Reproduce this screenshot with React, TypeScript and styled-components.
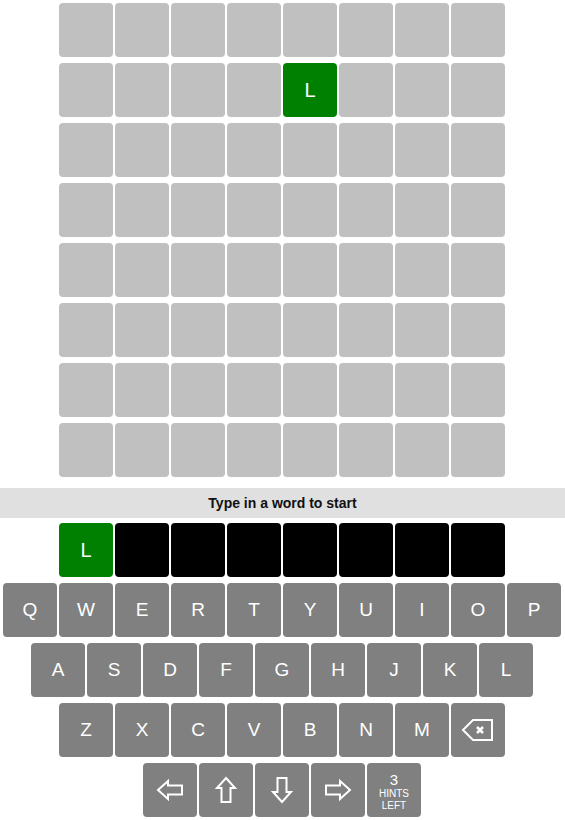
import styled, { createGlobalStyle } from "styled-components";

const GlobalStyle = createGlobalStyle`
  html, body {
    margin: 0;
    padding: 0;
    background: #ffffff;
    font-family: "Liberation Sans", Arial, sans-serif;
  }
`;

const Page = styled.div`
  width: 564px;
  display: flex;
  flex-direction: column;
  align-items: center;
`;

const Board = styled.div`
  display: flex;
  flex-direction: column;
  gap: 6px;
  padding-top: 3px;
`;

const Row = styled.div`
  display: flex;
  gap: 2px;
  justify-content: center;
`;

const Tile = styled.div<{ $tone: "empty" | "hit" | "blank" }>`
  width: 54px;
  height: 54px;
  border-radius: 4px;
  display: flex;
  align-items: center;
  justify-content: center;
  color: #ffffff;
  font-size: 20px;
  background: ${(p) =>
    p.$tone === "hit" ? "#008000" : p.$tone === "blank" ? "#000000" : "#c0c0c0"};
`;

const Message = styled.div`
  align-self: flex-start;
  width: 565px;
  margin-top: 11px;
  height: 30px;
  background: #e0e0e0;
  display: flex;
  align-items: center;
  justify-content: center;
  font-size: 14px;
  font-weight: bold;
  color: #111111;
`;

const Entry = styled(Row)`
  margin-top: 5px;
`;

const Keyboard = styled.div`
  margin-top: 6px;
  display: flex;
  flex-direction: column;
  gap: 6px;
`;

const Key = styled.div`
  width: 54px;
  height: 54px;
  border-radius: 4px;
  background: #808080;
  color: #ffffff;
  font-size: 19px;
  display: flex;
  align-items: center;
  justify-content: center;
`;

const HintKey = styled(Key)`
  flex-direction: column;
  font-size: 10px;
  line-height: 11.5px;
  padding-top: 2px;
  box-sizing: border-box;

  & b {
    font-weight: normal;
    font-size: 15px;
    line-height: 17px;
  }
`;

const board: string[][] = Array.from({ length: 8 }, (_, r) =>
  Array.from({ length: 8 }, (_, c) => (r === 1 && c === 4 ? "L" : ""))
);

const rows = ["QWERTYUIOP", "ASDFGHJKL", "ZXCVBNM"];

const Icon = ({ d }: { d: string }) => (
  <svg width="30" height="30" viewBox="0 0 30 30" fill="none">
    <path d={d} stroke="#ffffff" strokeWidth="2" strokeLinejoin="miter" />
  </svg>
);

const arrows = [
  "M3 15 L13 6 L13 10.5 L27 10.5 L27 19.5 L13 19.5 L13 24 Z",
  "M15 3 L24 13 L19.5 13 L19.5 27 L10.5 27 L10.5 13 L6 13 Z",
  "M15 27 L24 17 L19.5 17 L19.5 3 L10.5 3 L10.5 17 L6 17 Z",
  "M27 15 L17 6 L17 10.5 L3 10.5 L3 19.5 L17 19.5 L17 24 Z",
];

function App() {
  return (
    <Page>
      <GlobalStyle />
      <Board>
        {board.map((row, r) => (
          <Row key={r}>
            {row.map((ch, c) => (
              <Tile key={c} $tone={ch ? "hit" : "empty"}>
                {ch}
              </Tile>
            ))}
          </Row>
        ))}
      </Board>
      <Message>Type in a word to start</Message>
      <Entry>
        {Array.from({ length: 8 }, (_, i) => (
          <Tile key={i} $tone={i === 0 ? "hit" : "blank"}>
            {i === 0 ? "L" : ""}
          </Tile>
        ))}
      </Entry>
      <Keyboard>
        {rows.map((letters, r) => (
          <Row key={r}>
            {letters.split("").map((k) => (
              <Key key={k}>{k}</Key>
            ))}
            {r === 2 && (
              <Key>
                <svg width="34" height="26" viewBox="0 0 34 26" fill="none">
                  <path
                    d="M2 13 L12 3 L31 3 L31 23 L12 23 Z"
                    stroke="#ffffff"
                    strokeWidth="2"
                  />
                  <path
                    d="M16 10 L22 16 M22 10 L16 16"
                    stroke="#ffffff"
                    strokeWidth="2.5"
                  />
                </svg>
              </Key>
            )}
          </Row>
        ))}
        <Row>
          {arrows.map((d, i) => (
            <Key key={i}>
              <Icon d={d} />
            </Key>
          ))}
          <HintKey>
            <b>3</b>
            <span>HINTS</span>
            <span>LEFT</span>
          </HintKey>
        </Row>
      </Keyboard>
    </Page>
  );
}

export default App;
